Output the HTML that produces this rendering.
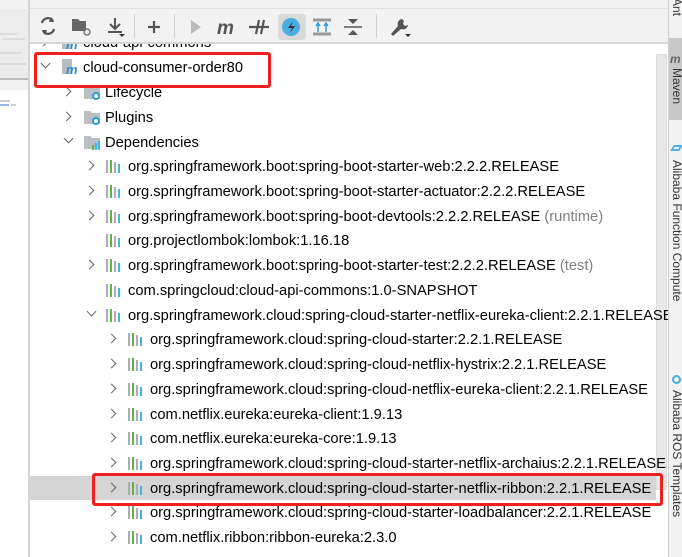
<!DOCTYPE html>
<html><head><meta charset="utf-8"><style>
*{margin:0;padding:0;box-sizing:border-box}
body{width:682px;height:557px;overflow:hidden;background:#fff;font-family:"Liberation Sans",sans-serif;font-size:14.7px;color:#000;position:relative}
.abs{position:absolute}
.row{position:absolute;left:30px;width:626px;height:25px;white-space:nowrap}
.row .t{position:absolute;top:4px;line-height:18px}
.g{color:#808080}
.arr{position:absolute;top:8px;width:7px;height:7px;border-right:1.5px solid #666;border-bottom:1.5px solid #666}
.ar{transform:rotate(-45deg)}
.ad{transform:rotate(45deg);top:5px}
.bars{position:absolute;top:6px;width:15px;height:13px}
.bars i{position:absolute;bottom:0;width:2px}
.vt{position:absolute;font-size:12px;transform:rotate(90deg);transform-origin:0 0;white-space:nowrap;color:#333;left:684px}
</style></head><body>
<div class="abs" style="left:0;top:0;width:28px;height:557px;background:#f2f2f2"></div>
<div class="abs" style="left:0;top:9px;width:28px;height:70px;background:#ececec"></div>
<div class="abs" style="left:0;top:33px;width:17px;height:2px;background:#ddd"></div>
<div class="abs" style="left:3px;top:38px;width:22px;height:2px;background:#ddd"></div>
<div class="abs" style="left:0;top:52px;width:22px;height:2px;background:#ddd"></div>
<div class="abs" style="left:0;top:63px;width:26px;height:2px;background:#d8d8d8"></div>
<div class="abs" style="left:0;top:78px;width:28px;height:2px;background:#bbb"></div>
<div class="abs" style="left:0;top:90px;width:28px;height:467px;background:#fff"></div>
<div class="abs" style="left:0;top:100px;width:10px;height:2px;background:#ccc"></div>
<div class="abs" style="left:0;top:104px;width:9px;height:2px;background:#9ab3e0"></div>
<div class="abs" style="left:11px;top:104px;width:5px;height:2px;background:#ccc"></div>
<div class="abs" style="left:28px;top:0;width:2px;height:557px;background:#d4d4d4"></div>
<div class="abs" style="left:30px;top:0;width:638px;height:43px;background:#f2f2f2;border-bottom:1px solid #d6d6d6"></div>
<div class="abs" style="left:30px;top:8px;width:638px;height:1px;background:#e0e0e0"></div>
<div class="abs" style="left:278px;top:14px;width:28px;height:26px;background:#d9d9d9;border-radius:3px"></div>
<svg class="abs" style="left:30px;top:9px" width="400" height="34">
<g fill="none" stroke="#555" stroke-width="2.2">
<path d="M12 14a6 6 0 0 1 11-2M24 20a6 6 0 0 1-11 2"/>
</g>
<path d="M21 8l3 5-5 0z M15 26l-3-5 5 0z" fill="#555"/>
<path d="M42 10h6l2 2h6v10h-14z" fill="#666"/>
<circle cx="57" cy="23" r="3" fill="none" stroke="#777" stroke-width="1.5"/>
<path d="M85 9v11M80 15l5 5 5-5" fill="none" stroke="#555" stroke-width="2"/>
<path d="M78 23h14" stroke="#555" stroke-width="2"/><path d="M89 25h6l-3 3z" fill="#333"/>
<rect x="104" y="5" width="1" height="24" fill="#d0d0d0"/>
<path d="M124 12v12M118 18h12" stroke="#555" stroke-width="2.2"/>
<rect x="144" y="5" width="1" height="24" fill="#d0d0d0"/>
<path d="M161 11l10 7-10 7z" fill="#bbb"/>
<text x="187" y="25" font-family="Liberation Sans" font-weight="bold" font-style="italic" font-size="19" fill="#555">m</text>
<path d="M219 18h20M229 11l-3 14M234 11l-3 14" stroke="#555" stroke-width="2.2"/>
<circle cx="261" cy="18" r="9" fill="#4aaee0"/>
<path d="M263 12l-5 7h4l-2 5 5-7h-4z" fill="#333"/>
<path d="M283 11h18M283 25h18" stroke="#999" stroke-width="3"/>
<path d="M288 23v-8M296 23v-8M286 17l2-3 2 3M294 17l2-3 2 3" stroke="#2a9ad8" stroke-width="1.4" fill="none"/>
<path d="M314 18h18" stroke="#555" stroke-width="1.5"/><path d="M318 10h10l-5 5z M318 26h10l-5-5z" fill="#555"/>
<rect x="346" y="5" width="1" height="24" fill="#d0d0d0"/>
<path d="M372 10a5 5 0 0 0-4 7l-7 8 2 2 8-7a5 5 0 0 0 7-4l-3 1-2-2 1-3z" fill="#555"/>
<path d="M375 25h6l-3 3z" fill="#333"/>
</svg>
<div class="abs" style="left:668px;top:0;width:14px;height:557px;background:#f2f2f2;border-left:1px solid #d0d0d0"></div>
<div class="abs" style="left:669px;top:38px;width:13px;height:82px;background:#c8c8c8"></div>
<div class="vt" style="top:-2px">Ant</div>
<div class="vt" style="top:68px">Maven</div>
<div class="abs" style="left:670px;top:52px;font-size:12px;font-weight:bold;font-style:italic;color:#666">m</div>
<div class="vt" style="top:160px">Alibaba Function Compute</div>
<div class="vt" style="top:390px">Alibaba ROS Templates</div>
<div class="abs" style="left:672px;top:145px;width:9px;height:6px;border:2px solid #4ab0e0;transform:skewX(-30deg)"></div>
<div class="abs" style="left:672px;top:375px;width:9px;height:9px;border:2px solid #4ab0e0;border-radius:50%"></div>
<div class="abs" style="left:656px;top:54px;width:11px;height:436px;background:#e8e8e8;border:1px solid #ddd"></div>
<div class="abs" style="left:30px;top:44px;width:638px;height:513px;overflow:hidden" id="tree">
<div class="abs" style="left:0;top:432px;width:626px;height:24px;background:#d5d5d5"></div>
</div>
<script>
var rows=[
[-14,0,1,'m','cloud-api-commons',''],
[11,0,2,'m','cloud-consumer-order80',''],
[36,1,1,'f','Lifecycle',''],
[61,1,1,'f','Plugins',''],
[86,1,2,'d','Dependencies',''],
[110,2,1,'b','org.springframework.boot:spring-boot-starter-web:2.2.2.RELEASE',''],
[135,2,1,'b','org.springframework.boot:spring-boot-starter-actuator:2.2.2.RELEASE',''],
[160,2,1,'b','org.springframework.boot:spring-boot-devtools:2.2.2.RELEASE',' (runtime)'],
[184,2,0,'b','org.projectlombok:lombok:1.16.18',''],
[209,2,1,'b','org.springframework.boot:spring-boot-starter-test:2.2.2.RELEASE',' (test)'],
[234,2,0,'b','com.springcloud:cloud-api-commons:1.0-SNAPSHOT',''],
[259,2,2,'b','org.springframework.cloud:spring-cloud-starter-netflix-eureka-client:2.2.1.RELEASE',''],
[283,3,1,'b','org.springframework.cloud:spring-cloud-starter:2.2.1.RELEASE',''],
[308,3,1,'b','org.springframework.cloud:spring-cloud-netflix-hystrix:2.2.1.RELEASE',''],
[333,3,1,'b','org.springframework.cloud:spring-cloud-netflix-eureka-client:2.2.1.RELEASE',''],
[358,3,1,'b','com.netflix.eureka:eureka-client:1.9.13',''],
[382,3,1,'b','com.netflix.eureka:eureka-core:1.9.13',''],
[407,3,1,'b','org.springframework.cloud:spring-cloud-starter-netflix-archaius:2.2.1.RELEASE',''],
[432,3,1,'b','org.springframework.cloud:spring-cloud-starter-netflix-ribbon:2.2.1.RELEASE',''],
[456,3,1,'b','org.springframework.cloud:spring-cloud-starter-loadbalancer:2.2.1.RELEASE',''],
[481,3,1,'b','com.netflix.ribbon:ribbon-eureka:2.3.0','']
];
var h='';
rows.forEach(function(r){
 var ax=[12,35,58,80][r[1]], ix=[32,54,76,98][r[1]], tx=[53,75,98,120][r[1]];
 h+='<div class="row" style="left:0;top:'+r[0]+'px">';
 if(r[2]==1)h+='<div class="arr ar" style="left:'+(ax-2)+'px"></div>';
 if(r[2]==2)h+='<div class="arr ad" style="left:'+ax+'px"></div>';
 if(r[3]=='b')h+='<div class="bars" style="left:'+ix+'px"><i style="left:0;height:13px;background:#a9b0b5"></i><i style="left:4px;height:13px;background:#62b543"></i><i style="left:8px;height:11px;background:#a9b0b5"></i><i style="left:12px;height:9px;background:#40b6e0"></i></div>';
 if(r[3]=='m')h+='<div style="position:absolute;left:'+ix+'px;top:4px;width:10px;height:15px;background:#b5bcc2"></div><div style="position:absolute;left:'+(ix+4)+'px;top:7px;font-size:13px;font-weight:bold;font-style:italic;color:#2a8fd0">m</div>';
 if(r[3]=='f'||r[3]=='d')h+='<div style="position:absolute;left:'+ix+'px;top:6px;width:16px;height:13px;background:#b9bfc4;clip-path:polygon(0 0,40% 0,50% 15%,100% 15%,100% 100%,0 100%)"></div>';
 if(r[3]=='f')h+='<div style="position:absolute;left:'+(ix+8)+'px;top:12px;width:8px;height:8px;border-radius:50%;background:#fff;border:2.5px solid #2a9ad8"></div>';
 if(r[3]=='d')h+='<div style="position:absolute;left:'+(ix+8)+'px;top:12px;width:8px;height:8px"><i style="position:absolute;left:0;bottom:0;width:2px;height:5px;background:#62b543"></i><i style="position:absolute;left:3px;bottom:0;width:2px;height:7px;background:#40b6e0"></i><i style="position:absolute;left:6px;bottom:0;width:2px;height:9px;background:#40b6e0"></i></div>';
 h+='<span class="t" style="left:'+tx+'px">'+r[4]+(r[5]?'<span class="g">'+r[5]+'</span>':'')+'</span></div>';
});
document.getElementById('tree').insertAdjacentHTML('beforeend',h);
</script>
<div class="abs" style="left:30px;top:43px;width:638px;height:1px;background:#d6d6d6"></div>
<div class="abs" style="left:34px;top:52px;width:237px;height:36px;border:3px solid #f0201e;border-radius:3px"></div>
<div class="abs" style="left:92px;top:473px;width:571px;height:33px;border:3px solid #f0201e;border-radius:3px"></div>
</body></html>
